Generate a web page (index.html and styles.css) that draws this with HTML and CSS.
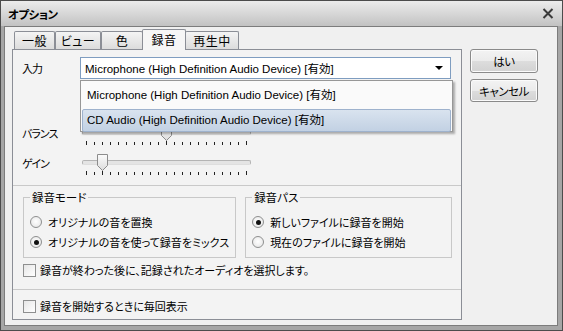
FILE: index.html
```html
<!DOCTYPE html>
<html lang="ja">
<head>
  <meta charset="UTF-8">
  <title>オプション</title>
  <link rel="stylesheet" href="styles.css">
</head>
<body>
  <div class="window">
    <!-- Title bar -->
    <div class="titlebar">
      <span class="title">オプション</span>
      <svg class="close" width="12" height="11" viewBox="0 0 12 11">
        <path d="M1.5 1l9 9M10.5 1l-9 9" stroke="#3a3a3a" stroke-width="2" fill="none"/>
      </svg>
    </div>

    <div class="main">
      <div class="tabs-area">
        <div class="tabstrip">
          <div class="tab tab-1">一般</div>
          <div class="tab tab-2">ビュー</div>
          <div class="tab tab-3">色</div>
          <div class="tab tab-4 active">録音</div>
          <div class="tab tab-5">再生中</div>
        </div>

        <div class="panel">
          <!-- Input device -->
          <div class="input-row">
            <span class="row-label">入力</span>
            <div class="combo">
              <span class="latin">Microphone (High Definition Audio Device) [有効]</span>
              <span class="arrow"></span>
            </div>
          </div>

          <div class="slider-row balance">
            <span class="row-label">バランス</span>
            <div class="slider">
              <div class="track"></div>
              <svg class="thumb thumb-mid" width="11" height="17" viewBox="0 0 11 17">
                <path d="M0.5 0.5h10v11l-5 5l-5-5z" fill="url(#thumbFill)" stroke="#8c8c8c"/>
              </svg>
              <svg class="ticks" width="170" height="5" viewBox="0 0 170 5">
                <path d="M4.5 0v4M164.5 0v4M84.5 0v4" stroke="#222" stroke-width="1"/>
                <path d="M12.5 1v3m8-3v3m8-3v3m8-3v3m8-3v3m8-3v3m8-3v3m8-3v3m8-3v3m16-3v3m8-3v3m8-3v3m8-3v3m8-3v3m8-3v3m8-3v3m8-3v3m8-3v3" stroke="#222" stroke-width="1"/>
              </svg>
            </div>
          </div>

          <div class="slider-row gain">
            <span class="row-label">ゲイン</span>
            <div class="slider">
              <div class="track"></div>
              <svg class="thumb thumb-low" width="11" height="17" viewBox="0 0 11 17">
                <defs>
                  <linearGradient id="thumbFill" x1="0" y1="0" x2="0" y2="1">
                    <stop offset="0" stop-color="#fbfbfb"/>
                    <stop offset="1" stop-color="#dcdcdc"/>
                  </linearGradient>
                </defs>
                <path d="M0.5 0.5h10v11l-5 5l-5-5z" fill="url(#thumbFill)" stroke="#8c8c8c"/>
              </svg>
              <svg class="ticks" width="170" height="5" viewBox="0 0 170 5">
                <path d="M4.5 0v4M164.5 0v4M20.5 0v4" stroke="#222" stroke-width="1"/>
                <path d="M12.5 1v3m16-3v3m8-3v3m8-3v3m8-3v3m8-3v3m8-3v3m8-3v3m8-3v3m8-3v3m8-3v3m8-3v3m8-3v3m8-3v3m8-3v3m8-3v3m8-3v3m8-3v3" stroke="#222" stroke-width="1"/>
              </svg>
            </div>
          </div>

          <div class="separator"></div>

          <!-- Recording groups -->
          <div class="groups">
            <fieldset class="group">
              <legend>録音モード</legend>
              <label class="option"><span class="radio"></span>オリジナルの音を置換</label>
              <label class="option"><span class="radio checked"></span>オリジナルの音を使って録音をミックス</label>
            </fieldset>
            <fieldset class="group group-path">
              <legend>録音パス</legend>
              <label class="option"><span class="radio checked"></span>新しいファイルに録音を開始</label>
              <label class="option"><span class="radio"></span>現在のファイルに録音を開始</label>
            </fieldset>
          </div>

          <label class="option check-row"><span class="checkbox"></span>録音が終わった後に、記録されたオーディオを選択します。</label>

          <div class="separator sep-low"></div>

          <label class="option check-row last"><span class="checkbox"></span>録音を開始するときに毎回表示</label>

          <!-- Open dropdown list -->
          <div class="dropdown">
            <div class="item latin">Microphone (High Definition Audio Device) [有効]</div>
            <div class="item selected latin">CD Audio (High Definition Audio Device) [有効]</div>
          </div>
        </div>
      </div>

      <div class="side">
        <button class="btn btn-ok">はい</button>
        <button class="btn btn-cancel">キャンセル</button>
      </div>
    </div>
  </div>
</body>
</html>
```

FILE: styles.css
```css
body {
  margin: 0;
  font-family: "Noto Sans CJK JP", sans-serif;
  font-size: 12px;
  font-feature-settings: "palt";
  color: #000;
  background: #fff;
}
.window {
  width: 563px;
  height: 331px;
  box-sizing: border-box;
  border: 1px solid #4c4c4c;
  background: #a6a6a6;
  padding: 0 4px 4px 3px;
  display: flex;
  flex-direction: column;
}
.titlebar {
  height: 25px;
  margin: 0 -4px 0 -3px;
  padding: 0 8px 0 7px;
  background: linear-gradient(#ececec, #c2c2c2);
  display: flex;
  align-items: center;
  justify-content: space-between;
}
.title {
  font-weight: bold;
  font-size: 11.5px;
  letter-spacing: -0.5px;
  line-height: 16px;
}
.close {
  display: block;
}
.main {
  flex: 1;
  background: #f0f0f0;
  border: 1px solid #7c7c7c;
  display: flex;
  padding: 2px 0 0 7px;
}
.tabs-area {
  width: 450px;
  display: flex;
  flex-direction: column;
}
.tabstrip {
  height: 20px;
  display: flex;
  align-items: flex-end;
  padding-left: 2px;
  position: relative;
  z-index: 1;
}
.tab {
  height: 18px;
  box-sizing: border-box;
  border: 1px solid #8b8e96;
  border-bottom: none;
  border-radius: 2px 2px 0 0;
  background: linear-gradient(#f4f4f4, #dcdcdc);
  display: flex;
  align-items: center;
  justify-content: center;
  line-height: 16px;
  letter-spacing: 0.5px;
}
.tab-1 { width: 41px; }
.tab-2 { width: 46px; }
.tab-3 { width: 42px; }
.tab-4 { width: 44px; }
.tab-5 { width: 54px; }
.tab.active {
  height: 21px;
  margin: 0 -1px -1px -1px;
  background: #f6f6f6;
  padding-bottom: 1px;
}
.panel {
  height: 271px;
  box-sizing: border-box;
  border: 1px solid #8b8e96;
  background: #f3f3f3;
  position: relative;
  padding: 7px 9px 0 9px;
}
.row-label {
  line-height: 16px;
  font-size: 11px;
  letter-spacing: -1px;
}
.input-row {
  display: flex;
  align-items: center;
  height: 22px;
}
.input-row .row-label {
  width: 58px;
}
.latin {
  font-family: "Liberation Sans", "Noto Sans CJK JP", sans-serif;
  font-size: 11.5px;
  font-feature-settings: normal;
}
.combo {
  width: 371px;
  height: 22px;
  box-sizing: border-box;
  border: 1px solid #7f9dc0;
  background: #fff;
  display: flex;
  align-items: center;
  justify-content: space-between;
  padding: 0 7px 0 4px;
}
.arrow {
  width: 0;
  height: 0;
  border-left: 4px solid transparent;
  border-right: 4px solid transparent;
  border-top: 4px solid #000;
}
.slider-row {
  display: grid;
  grid-template-columns: 60px 170px;
  height: 22px;
}
.slider-row .row-label {
  margin-top: 1px;
}
.balance {
  margin-top: 45px;
}
.gain {
  margin-top: 8px;
}
.slider {
  position: relative;
  height: 22px;
}
.track {
  margin-top: 6px;
  height: 3px;
  border: 1px solid #b4b4b4;
  border-bottom-color: #dedede;
  border-radius: 2px;
  background: #e4e4e4;
  width: 167px;
}
.thumb {
  position: absolute;
  top: 0;
  display: block;
}
.thumb-mid { left: 79px; }
.thumb-low { left: 15px; }
.ticks {
  position: absolute;
  left: 0;
  top: 17px;
  display: block;
}
.separator {
  height: 0;
  border-top: 1px solid #c9c9c9;
  margin: 9px -9px 0 -9px;
}
.groups {
  display: flex;
  gap: 9px;
  margin: 3px 0 0 1px;
}
.group {
  margin: 0;
  width: 210px;
  box-sizing: border-box;
  border: 1px solid #c8c8c8;
  padding: 7px 6px 5px 6px;
}
.group-path {
  width: 211px;
}
.group legend {
  padding: 0 2px;
  line-height: 16px;
  font-size: 11.5px;
}
.option {
  display: flex;
  align-items: center;
  height: 20px;
  line-height: 16px;
  font-size: 11px;
  white-space: nowrap;
}
.radio {
  flex: none;
  width: 12px;
  height: 12px;
  box-sizing: border-box;
  border: 1px solid #8e8f8f;
  border-radius: 50%;
  background: radial-gradient(circle at 50% 45%, #ffffff, #e2e2e2);
  margin-right: 6px;
  position: relative;
}
.radio.checked::after {
  content: "";
  position: absolute;
  left: 2.5px;
  top: 2.5px;
  width: 5px;
  height: 5px;
  border-radius: 50%;
  background: #111;
}
.check-row {
  margin: 2px 0 0 1px;
}
.check-row.last {
  margin-top: 6px;
}
.sep-low {
  margin-top: 9px;
}
.checkbox {
  flex: none;
  width: 13px;
  height: 13px;
  box-sizing: border-box;
  border: 1px solid #8e8f8f;
  background: linear-gradient(135deg, #e6e6e6, #ffffff);
  margin-right: 4px;
}
.dropdown {
  position: absolute;
  left: 67px;
  top: 30px;
  width: 373px;
  height: 52px;
  box-sizing: border-box;
  border: 1px solid #979797;
  background: #fafafa;
  box-shadow: 2px 2px 2px rgba(0, 0, 0, 0.3);
  padding: 2px 1px 1px 1px;
  z-index: 2;
}
.item {
  height: 22px;
  line-height: 22px;
  padding-left: 4px;
  border: 1px solid transparent;
  border-radius: 2px;
}
.item.selected {
  height: 21px;
  line-height: 21px;
  margin-top: 2px;
  border-color: #9eb2cd;
  background: linear-gradient(#d9e3ef, #c2d1e3);
}
.side {
  margin-left: 8px;
  padding-top: 20px;
  display: flex;
  flex-direction: column;
  gap: 6px;
}
.btn {
  width: 68px;
  height: 24px;
  box-sizing: border-box;
  border: 1px solid #8a8a8a;
  border-radius: 3px;
  background: linear-gradient(#f3f3f3 0%, #ebebeb 50%, #dddddd 51%, #d2d2d2 100%);
  box-shadow: inset 0 0 0 1px #fbfbfb;
  font-family: "Noto Sans CJK JP", sans-serif;
  font-size: 11.5px;
  font-feature-settings: "palt";
  letter-spacing: -0.5px;
  padding: 0;
  color: #000;
}
.btn-cancel {
  height: 23px;
}
```
